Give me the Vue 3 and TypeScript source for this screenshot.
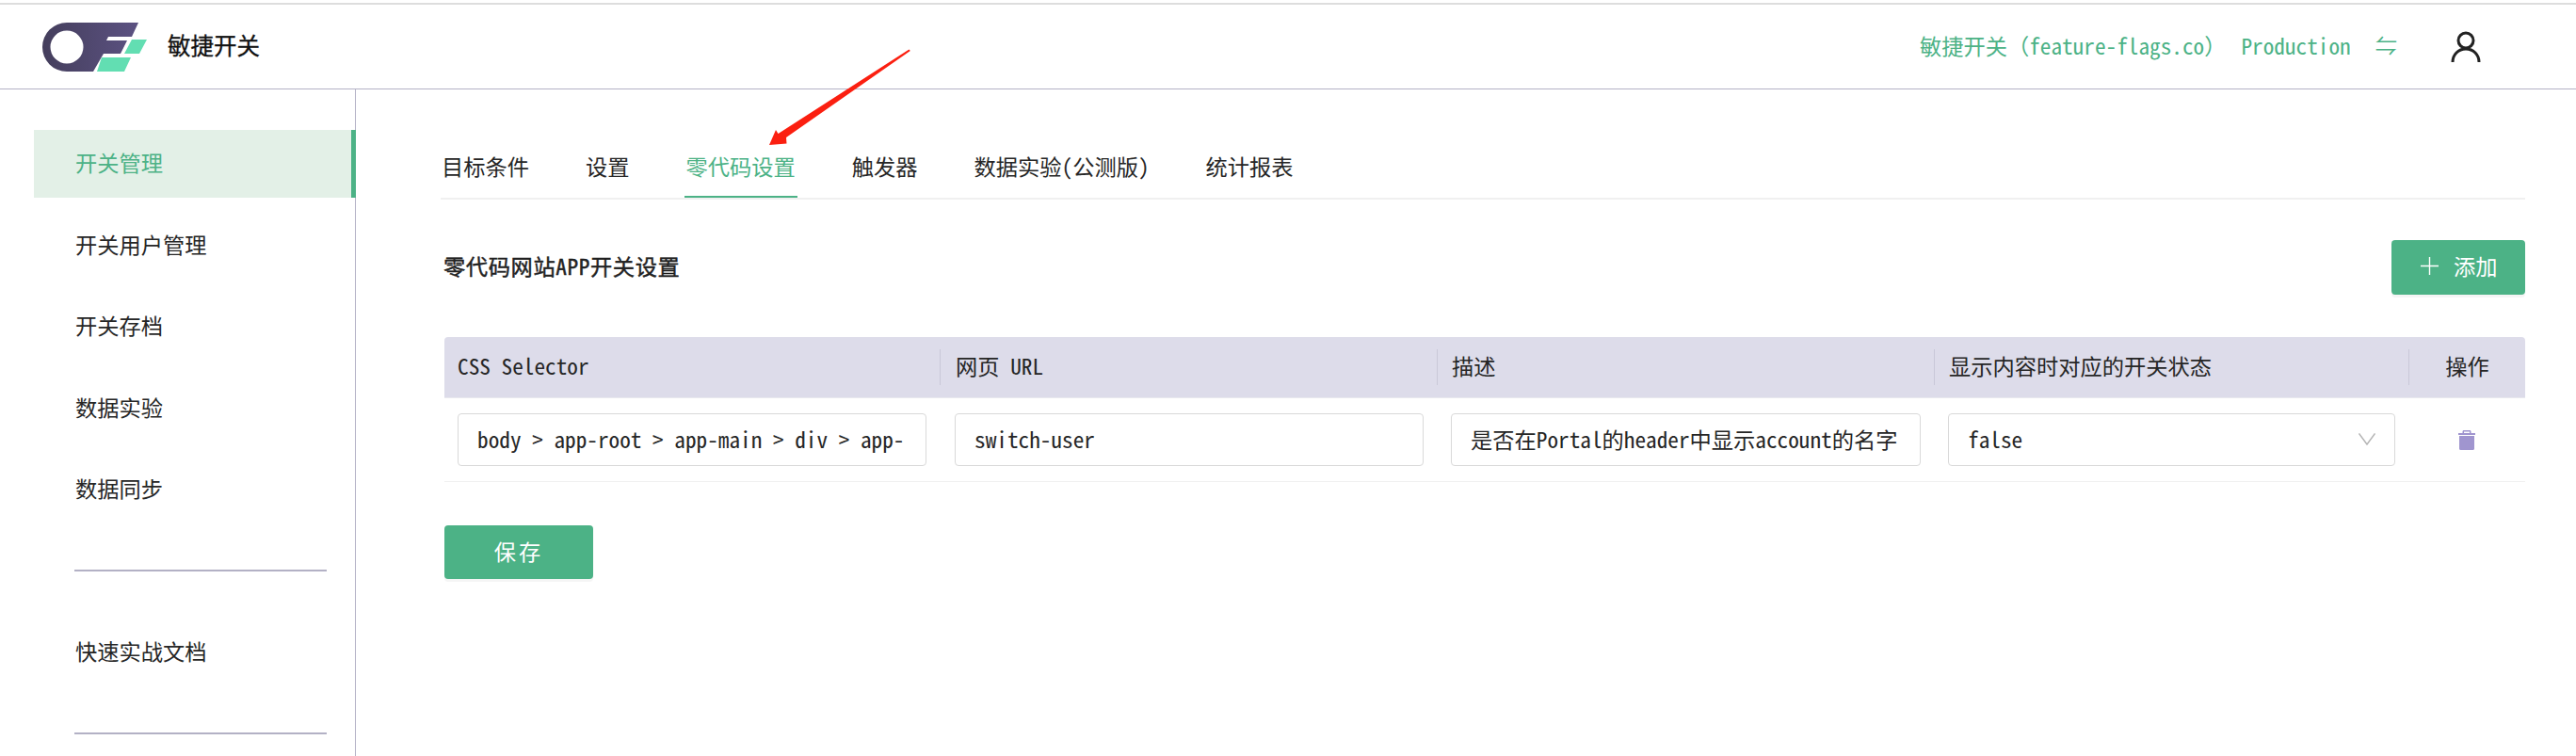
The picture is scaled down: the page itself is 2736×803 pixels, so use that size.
<script setup lang="ts">
import { ref } from "vue";

const menu = ["开关管理", "开关用户管理", "开关存档", "数据实验", "数据同步"];
const tabs = ["目标条件", "设置", "零代码设置", "触发器", "数据实验(公测版)", "统计报表"];
const activeTab = ref("零代码设置");
const columns = ["CSS Selector", "网页 URL", "描述", "显示内容时对应的开关状态"];
const selector = ref("body > app-root > app-main > div > app-header");
const url = ref("switch-user");
const description = ref("是否在Portal的header中显示account的名字");
</script>

<template>
  <div class="page">
    <header class="topbar">
      <svg class="logo" width="112" height="52" viewBox="45 23 112 52">
        <defs>
          <linearGradient id="logoBody" x1="0" y1="0" x2="1" y2="0">
            <stop offset="0" stop-color="#443e5c" />
            <stop offset="1" stop-color="#5c5282" />
          </linearGradient>
        </defs>
        <path
          fill="url(#logoBody)"
          fill-rule="evenodd"
          d="M71 23H147L140 38H115L113 42H135L128 56H110L99 75H71A26 26 0 0 1 71 23ZM71 31.5A17.5 17.5 0 1 0 71 66.5A17.5 17.5 0 1 0 71 31.5Z"
        />
        <path fill="#62deb2" d="M140 41H156L148 56H132ZM108 60H139L132 75H103Z" />
      </svg>
      <span class="brand">敏捷开关</span>
      <span class="env env-site">敏捷开关（feature-flags.co）</span>
      <span class="env env-name">Production</span>
      <span class="env swap">⇋</span>
      <svg class="user" width="32" height="34" viewBox="0 0 32 34" fill="none" stroke="#222" stroke-width="3">
        <circle cx="16" cy="10" r="8" />
        <path d="M2 33C2 25 8 19 16 19S30 25 30 33" />
      </svg>
    </header>

    <div class="body">
      <aside class="sidebar">
        <a v-for="(item, i) in menu" :key="item" class="menu-item" :class="{ active: i === 0 }">{{ item }}</a>
        <div class="divider" />
        <a class="menu-item">快速实战文档</a>
        <div class="divider" />
      </aside>

      <main class="main">
        <nav class="tabs">
          <a v-for="tab in tabs" :key="tab" class="tab" :class="{ active: tab === activeTab }">{{ tab }}</a>
        </nav>

        <div class="title-row">
          <h2 class="title">零代码网站APP开关设置</h2>
          <button class="btn add-btn">
            <svg width="19" height="19" viewBox="0 0 19 19" stroke="#fff" stroke-width="1.4">
              <path d="M9.5 0V19M0 9.5H19" />
            </svg>
            添加
          </button>
        </div>

        <div class="table">
          <div v-for="col in columns" :key="col" class="th"><span>{{ col }}</span></div>
          <div class="th th-action"><span>操作</span></div>

          <div class="td"><input v-model="selector" class="field" /></div>
          <div class="td"><input v-model="url" class="field" /></div>
          <div class="td"><input v-model="description" class="field" /></div>
          <div class="td">
            <div class="field select">
              false
              <svg width="18" height="13" viewBox="0 0 18 13" fill="none" stroke="#b5b5b5" stroke-width="1.5">
                <path d="M0.5 0.5L9 12L17.5 0.5" />
              </svg>
            </div>
          </div>
          <div class="td td-action">
            <svg width="18" height="21" viewBox="0 0 18 21" fill="#a095cf">
              <path d="M6 0H12C13 0 13.5 .6 13.5 1.5V3H18V5H0V3H4.500V1.500C4.500 .6 5 0 6 0ZM6 1.500V3H12V1.500Z" fill-rule="evenodd" />
              <path d="M1 6H17V19.500C17 20.400 16.400 21 15.500 21H2.500C1.600 21 1 20.400 1 19.500Z" />
            </svg>
          </div>
        </div>

        <button class="btn save-btn">保存</button>
      </main>
    </div>

    <svg class="arrow" width="2736" height="803" viewBox="0 0 2736 803">
      <polygon fill="#fb1f10" points="965.500,52.500 966.800,54 835,146 835.500,152.500 817,154 824,138 826.500,142" />
    </svg>
  </div>
</template>

<style>
html,
body {
  margin: 0;
  background: #fff;
  overflow: hidden;
}
</style>

<style scoped>
.page {
  position: relative;
  width: 2736px;
  height: 803px;
  overflow: hidden;
  font-family: "Noto Sans Mono CJK SC", "Liberation Mono", "Noto Sans CJK SC", monospace;
  font-size: 23.25px;
  color: #262626;
}

.topbar {
  box-sizing: border-box;
  display: flex;
  align-items: center;
  height: 92px;
  margin-top: 3px;
  padding: 0 101px 0 45px;
  border-top: 2px solid #dddddd;
  border-bottom: 1px solid #b3b1c5;
}

.brand {
  margin-left: 21px;
  font-size: 24.500px;
  line-height: 24px;
  margin-top: -4px;
  color: #111;
  -webkit-text-stroke: 0.3px #111;
}

.env {
  line-height: 24px;
  margin-top: -4px;
  color: #4cb286;
}

.env-site {
  margin-left: auto;
}

.env-name {
  margin-left: 16px;
}

.swap {
  margin-left: 26px;
  margin-top: -6px;
}

.user {
  margin: 0 0 0 57px;
}

.body {
  display: flex;
  height: 708px;
}

.sidebar {
  box-sizing: border-box;
  flex: 0 0 378px;
  padding: 43px 0 0 36px;
  border-right: 1px solid #b3b1c5;
}

.menu-item {
  display: block;
  box-sizing: border-box;
  height: 72px;
  margin-bottom: 14.6px;
  padding-left: 44px;
  line-height: 68px;
}

.menu-item.active {
  margin-right: -1px;
  background: #e3f0e7;
  border-right: 5px solid #4cb286;
  color: #4cb286;
}

.divider {
  height: 2px;
  margin: 49px 30px 50px 43px;
  background: #b3b1c5;
}

.main {
  flex: 1;
  min-width: 0;
  padding: 68px 54px 0 94px;
}

.tabs {
  display: flex;
  gap: 56px;
  margin-left: -4px;
  padding-left: 0;
  border-bottom: 2px solid #f0f0f0;
}

.tab {
  height: 30px;
  padding: 0 2px 15px;
  line-height: 26px;
  border-bottom: 2px solid transparent;
}

.tab:first-child {
  margin-left: -1px;
}

.tab.active {
  color: #4cb286;
  border-bottom-color: #4cb286;
}

.title-row {
  display: flex;
  justify-content: space-between;
  align-items: center;
  margin-top: 43px;
}

.title {
  margin: 0 0 4px -1px;
  font-size: 23.25px;
  font-weight: 400;
  letter-spacing: 0.6px;
  -webkit-text-stroke: 0.4px #111;
}

.btn {
  border: 0;
  border-radius: 4px;
  background: #4cb286;
  color: #fff;
  font: inherit;
  box-shadow: 0 3px 0 rgba(0, 0, 0, 0.04);
}

.add-btn {
  display: flex;
  align-items: center;
  gap: 16px;
  width: 142px;
  height: 58px;
  padding: 0 0 4px 31px;
}

.table {
  display: grid;
  grid-template-columns: 526px 528px 528px 504px 124px;
  margin-top: 45px;
}

.th {
  display: flex;
  align-items: center;
  height: 65px;
  background: #dddcea;
  border-bottom: 1px solid #e8e8ee;
  box-sizing: border-box;
}

.th span {
  height: 38px;
  padding-left: 15px;
  line-height: 34px;
  border-left: 1px solid #c9c8d8;
}

.th:first-child span {
  padding-left: 14px;
  border-left: 0;
}

.th:nth-child(2) span {
  padding-left: 16px;
}

.th:first-child {
  border-top-left-radius: 4px;
}

.th-action {
  border-top-right-radius: 4px;
}

.th-action span {
  flex: 1;
  padding-left: 0;
  text-align: center;
}

.td {
  display: flex;
  align-items: center;
  height: 89px;
  padding: 0 14px 0 15px;
  border-bottom: 1px solid #f0f0f0;
  box-sizing: border-box;
}

.td:nth-child(6) {
  padding-left: 14px;
}

.td:nth-child(7) {
  padding-left: 16px;
}

.field {
  box-sizing: border-box;
  width: 100%;
  height: 56px;
  padding: 0 23px 2px 20px;
  border: 1px solid #d9d9d9;
  border-radius: 4px;
  background: #fff;
  color: #262626;
  font: inherit;
  outline: none;
}

.select {
  display: flex;
  align-items: center;
  justify-content: space-between;
  padding-right: 20px;
}

.td-action {
  justify-content: center;
  padding: 0;
}

.save-btn {
  display: block;
  width: 158px;
  height: 57px;
  margin-top: 46px;
  padding-bottom: 4px;
  letter-spacing: 3px;
}

.arrow {
  position: absolute;
  top: 0;
  left: 0;
  pointer-events: none;
}
</style>
